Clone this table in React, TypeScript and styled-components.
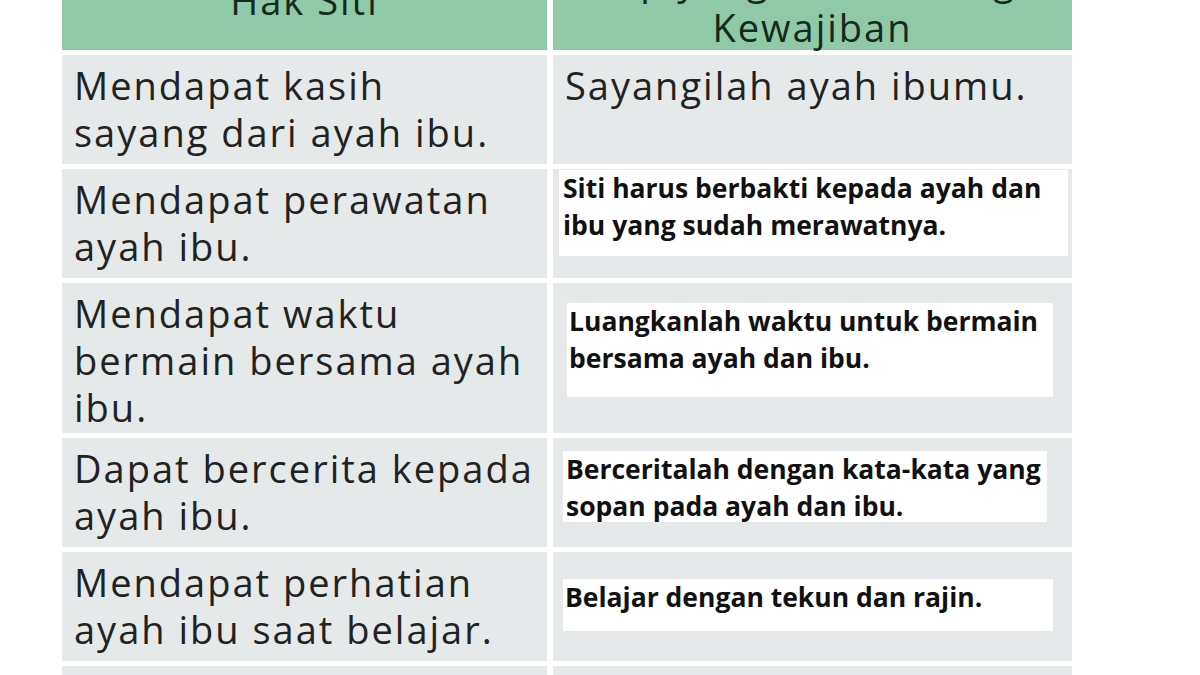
import React from 'react';
import styled, { createGlobalStyle } from 'styled-components';

const GlobalStyle = createGlobalStyle`
  html, body {
    margin: 0;
    padding: 0;
    background: #ffffff;
    overflow: hidden;
  }
  body {
    font-family: 'Open Sans', 'Noto Sans', sans-serif;
  }
`;

type Box = { top: number; left: number; width: number; height: number; pad: number };

type RowData = {
  hak: string[];
  answer: string[];
  box?: Box;
};

const rows: RowData[] = [
  {
    hak: ['Mendapat kasih', 'sayang dari ayah ibu.'],
    answer: ['Sayangilah ayah ibumu.'],
  },
  {
    hak: ['Mendapat perawatan', 'ayah ibu.'],
    answer: ['Siti harus berbakti kepada ayah dan', 'ibu yang sudah merawatnya.'],
    box: { top: 1, left: 6, width: 509, height: 86, pad: 4 },
  },
  {
    hak: ['Mendapat waktu', 'bermain bersama ayah', 'ibu.'],
    answer: ['Luangkanlah waktu untuk bermain', 'bersama ayah dan ibu.'],
    box: { top: 20, left: 14, width: 486, height: 94, pad: 2 },
  },
  {
    hak: ['Dapat bercerita kepada', 'ayah ibu.'],
    answer: ['Berceritalah dengan kata-kata yang', 'sopan pada ayah dan ibu.'],
    box: { top: 13, left: 10, width: 484, height: 71, pad: 3 },
  },
  {
    hak: ['Mendapat perhatian', 'ayah ibu saat belajar.'],
    answer: ['Belajar dengan tekun dan rajin.'],
    box: { top: 27, left: 10, width: 490, height: 52, pad: 2 },
  },
  {
    hak: ['Mendapat pakaian dan', 'makanan dari ayah ibu.'],
    answer: ['Pakailah pakaian dengan rapi.'],
    box: { top: 24, left: 10, width: 490, height: 52, pad: 2 },
  },
];

const Page = styled.div`
  margin-top: -40px;
  padding-left: 62px;
`;

const Table = styled.div`
  display: grid;
  grid-template-columns: 485px 519px;
  column-gap: 6px;
  row-gap: 5px;
`;

const Line = styled.div`
  white-space: nowrap;
`;

const HeadCell = styled.div<{ $padBottom: number }>`
  height: 90px;
  box-sizing: border-box;
  padding-bottom: ${(p) => p.$padBottom}px;
  background: #8fc9a7;
  color: #16291e;
  display: flex;
  flex-direction: column;
  align-items: center;
  justify-content: center;
  gap: 3px;
  font-size: 38px;
  line-height: 44px;
  letter-spacing: 2px;
`;

const Cell = styled.div`
  min-height: 109px;
  box-sizing: border-box;
  padding: 7px 12px 2px;
  background: #e5e9e9;
  color: #222;
  font-size: 38px;
  line-height: 47px;
  letter-spacing: 2px;
`;

const BoxCell = styled.div`
  min-height: 109px;
  box-sizing: border-box;
  background: #e5e9e9;
  display: flex;
  align-items: flex-start;
`;

const Answer = styled.div<{ $box: Box }>`
  margin-top: ${(p) => p.$box.top}px;
  margin-left: ${(p) => p.$box.left}px;
  width: ${(p) => p.$box.width}px;
  height: ${(p) => p.$box.height}px;
  box-sizing: border-box;
  padding-left: ${(p) => p.$box.pad}px;
  background: #ffffff;
  color: #111;
  font-size: 26.5px;
  font-weight: 700;
  line-height: 37px;
`;

const Lines = ({ items }: { items: string[] }) => (
  <>
    {items.map((l) => (
      <Line key={l}>{l}</Line>
    ))}
  </>
);

export default function App() {
  return (
    <>
      <GlobalStyle />
      <Page>
        <Table>
          <HeadCell $padBottom={10}>
            <Line>Hak Siti</Line>
          </HeadCell>
          <HeadCell $padBottom={4}>
            <Line>Sikap yang Sesuai dengan</Line>
            <Line>Kewajiban</Line>
          </HeadCell>

          {rows.map((row, i) => (
            <React.Fragment key={i}>
              <Cell>
                <Lines items={row.hak} />
              </Cell>
              {row.box ? (
                <BoxCell>
                  <Answer $box={row.box}>
                    <Lines items={row.answer} />
                  </Answer>
                </BoxCell>
              ) : (
                <Cell>
                  <Lines items={row.answer} />
                </Cell>
              )}
            </React.Fragment>
          ))}
        </Table>
      </Page>
    </>
  );
}
